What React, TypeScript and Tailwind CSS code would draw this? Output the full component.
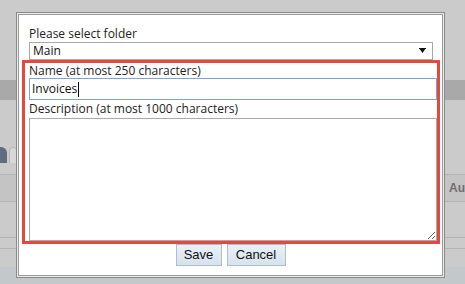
import React from "react";

const font = { fontFamily: '"Open Sans", "Noto Sans", sans-serif' };

function BackgroundPage() {
  return (
    <div className="flex h-full w-full flex-col bg-[#cbcbcb]">
      <div className="h-[80px]" />
      <div className="h-[20px] bg-[#a9a9a9]" />
      <div className="h-[47px]" />
      {/* tabs */}
      <div className="flex h-[16px] items-end gap-[2px]">
        <div className="h-[16px] w-[7px] rounded-tr-[6px] bg-[#5f6d7d]" />
        <div className="h-[16px] w-[8px] rounded-t-[6px] border border-b-0 border-[#b8b8b8] bg-[#d8d8d8]" />
      </div>
      <div className="h-[12px] border-b border-[#b4b4b4]" />
      <div className="flex h-[27px] items-center justify-end border-b border-[#b4b4b4] bg-[#c4c4c4]">
        <span
          className="text-[12px] font-bold leading-[14px] text-[#6e6e6e]"
          style={{ fontFamily: '"Liberation Sans", Arial, sans-serif' }}
        >
          Au
        </span>
      </div>
      <div className="h-[36px] border-b border-[#b4b4b4]" />
      <div className="h-[11px] border-b border-[#b4b4b4]" />
      <div className="h-[18px]" />
      <div className="flex-1 bg-[#c3c9ca]" />
    </div>
  );
}

function Dialog() {
  return (
    <div className="absolute left-[16px] top-[12px] h-[266px] w-[429px] border border-[#8a8a8a] bg-[#ececec] p-px">
      <div className="flex h-full flex-col border border-[#9a9a9a] bg-white" style={font}>
        <div className="ml-[10px] mt-[11px] h-[16px] text-[12px] leading-[16px] text-[#222]">
          Please select folder
        </div>
        <div className="ml-[10px] flex h-[18px] w-[404px] items-center justify-between border border-[#a9a9a9] pl-[3px] pr-[6px] text-[12px] text-[#111]">
          <span className="leading-[16px]">Main</span>
          <svg width="7" height="6" viewBox="0 0 7 6">
            <polygon points="0,0 7,0 3.5,5" fill="#111" />
            <rect x="0" y="0" width="7" height="1" fill="#111" />
          </svg>
        </div>
        <div className="ml-[3px] flex h-[184px] w-[418px] flex-col border-[3px] border-[#e5483f] pl-[4px]">
          <div className="h-[15px] text-[12px] leading-[15px] text-[#222]">
            Name (at most 250 characters)
          </div>
          <div className="flex h-[22px] w-[408px] items-center border border-[#7fa5d8] pl-[2px] text-[12px] text-[#111]">
            <span>Invoices</span>
            <span className="ml-px h-[15px] w-px bg-black" />
          </div>
          <div className="flex h-[18px] items-center text-[12px] text-[#222]">
            Description (at most 1000 characters)
          </div>
          <textarea
            className="h-[123px] w-[408px] resize border border-[#a9a9a9] bg-white outline-none"
            defaultValue=""
          />
        </div>
        <div
          className="flex h-[22px] justify-center gap-[5px] text-[13px] text-[#111]"
          style={{ fontFamily: '"Liberation Sans", Arial, sans-serif' }}
        >
          <button className="h-[22px] w-[46px] border border-[#a7c0d8] bg-gradient-to-b from-[#eaf1f7] to-[#d6e2ec]">
            Save
          </button>
          <button className="h-[22px] w-[59px] border border-[#a7c0d8] bg-gradient-to-b from-[#eaf1f7] to-[#d6e2ec]">
            Cancel
          </button>
        </div>
      </div>
    </div>
  );
}

export default function App() {
  return (
    <div className="relative h-[284px] w-[465px] overflow-hidden">
      <BackgroundPage />
      <Dialog />
    </div>
  );
}
